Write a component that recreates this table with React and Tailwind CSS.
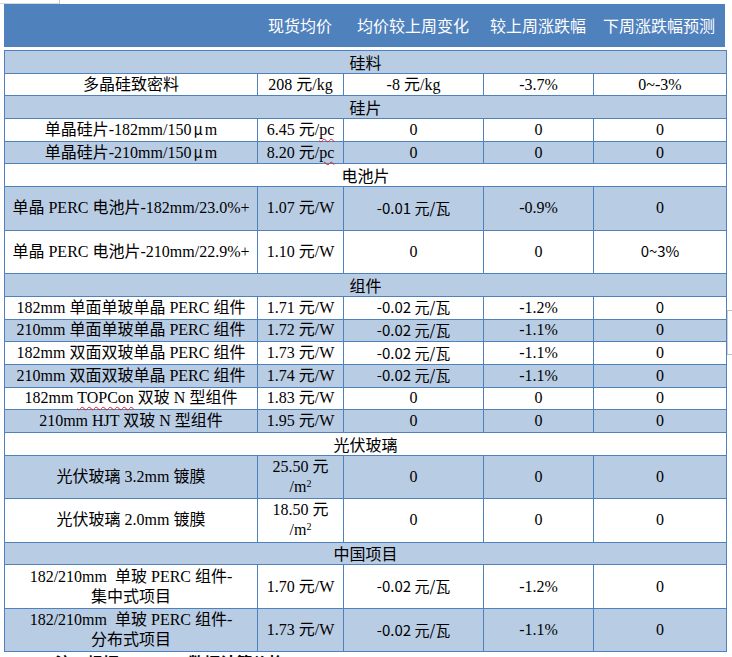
const BLUE = 'bg-[#b8cce4]';
const WHITE = 'bg-white';

const Wavy = ({ children }) => (
  <span className="underline decoration-wavy decoration-[#e02020] decoration-1 underline-offset-[3px]">{children}</span>
);

const Mu = () => <span className="font-['Noto_Sans_CJK_SC',sans-serif] mx-[2px] text-[15px]">μ</span>;

const Sans = ({ children }) => <span className="font-['Noto_Sans_CJK_SC',sans-serif] text-[15px]">{children}</span>;

const rows = [
  { section: '硅料', bg: BLUE },
  { cells: ['多晶硅致密料', '208 元/kg', '-8 元/kg', '-3.7%', '0~-3%'], bg: WHITE },
  { section: '硅片', bg: BLUE },
  { cells: [<>单晶硅片-182mm/150<Mu />m</>, <>6.45 元/<Wavy>pc</Wavy></>, '0', '0', '0'], bg: WHITE },
  { cells: [<>单晶硅片-210mm/150<Mu />m</>, <>8.20 元/<Wavy>pc</Wavy></>, '0', '0', '0'], bg: BLUE },
  { section: '电池片', bg: WHITE },
  { cells: ['单晶 PERC 电池片-182mm/23.0%+', '1.07 元/W', <Sans>-0.01 元/瓦</Sans>, '-0.9%', '0'], bg: BLUE, tall: true },
  { cells: ['单晶 PERC 电池片-210mm/22.9%+', '1.10 元/W', '0', '0', <Sans>0~3%</Sans>], bg: WHITE, tall: true },
  { section: '组件', bg: BLUE },
  { cells: ['182mm 单面单玻单晶 PERC 组件', '1.71 元/W', <Sans>-0.02 元/瓦</Sans>, '-1.2%', <Sans>0</Sans>], bg: WHITE },
  { cells: ['210mm 单面单玻单晶 PERC 组件', '1.72 元/W', <Sans>-0.02 元/瓦</Sans>, '-1.1%', '0'], bg: BLUE },
  { cells: ['182mm 双面双玻单晶 PERC 组件', '1.73 元/W', <Sans>-0.02 元/瓦</Sans>, '-1.1%', '0'], bg: WHITE },
  { cells: ['210mm 双面双玻单晶 PERC 组件', '1.74 元/W', <Sans>-0.02 元/瓦</Sans>, '-1.1%', '0'], bg: BLUE },
  { cells: [<>182mm <Wavy>TOPCon</Wavy> 双玻 N 型组件</>, '1.83 元/W', '0', '0', '0'], bg: WHITE },
  { cells: ['210mm HJT 双玻 N 型组件', '1.95 元/W', '0', '0', '0'], bg: BLUE },
  { section: '光伏玻璃', bg: WHITE },
  { cells: ['光伏玻璃 3.2mm 镀膜', <>25.50 元<br />/m<sup className="text-[10px]">2</sup></>, '0', '0', '0'], bg: BLUE, tall: true },
  { cells: ['光伏玻璃 2.0mm 镀膜', <>18.50 元<br />/m<sup className="text-[10px]">2</sup></>, '0', '0', '0'], bg: WHITE, tall: true },
  { section: '中国项目', bg: BLUE },
  { cells: [<>182/210mm&nbsp; 单玻 PERC 组件-<br />集中式项目</>, '1.70 元/W', <Sans>-0.02 元/瓦</Sans>, '-1.2%', '0'], bg: WHITE, tall: true },
  { cells: [<>182/210mm&nbsp; 单玻 PERC 组件-<br />分布式项目</>, '1.73 元/W', <Sans>-0.02 元/瓦</Sans>, '-1.1%', '0'], bg: BLUE, tall: true },
];

const headers = ['', '现货均价', '均价较上周变化', '较上周涨跌幅', '下周涨跌幅预测'];

export default function App() {
  return (
    <div className="relative w-[732px] h-[657px] overflow-hidden bg-white text-black font-['Liberation_Serif','Noto_Sans_CJK_SC',serif] text-[16px]">
      <div className="absolute left-[59px] top-0 h-[4px] w-px bg-[#c8c8c8]" />
      <div className="absolute left-0 top-[3px] h-px w-[59px] bg-[#d8d8d8]" />
      <div className="absolute left-[727px] top-[310px] h-[45px] w-px bg-[#d0d0d0]" />
      <div className="absolute left-[727px] top-[310px] h-px w-[5px] bg-[#c0c0c0]" />
      <div className="absolute left-[727px] top-[354px] h-px w-[5px] bg-[#c0c0c0]" />

      <div className="pl-[4px] pt-[4px]">
        <div className="grid grid-cols-[253px_86px_140px_110px_132px] h-[43px] w-[721px] bg-[#4f81bd] text-white text-[16px] font-['Noto_Sans_CJK_SC',sans-serif]">
          {headers.map((h, i) => (
            <div key={i} className="flex items-center justify-center pb-[1px]">{h}</div>
          ))}
        </div>

        <table className="mt-[3px] w-[722px] table-fixed border-collapse">
          <colgroup>
            <col className="w-[253px]" />
            <col className="w-[86px]" />
            <col className="w-[140px]" />
            <col className="w-[110px]" />
            <col className="w-[133px]" />
          </colgroup>
          <tbody>
            {rows.map((r, i) =>
              r.section ? (
                <tr key={i} className={`${r.bg} h-[22.7px]`}>
                  <td colSpan={5} className="border border-[#4f81bd] p-0 text-center leading-[20px] font-['Noto_Sans_CJK_SC',sans-serif]">
                    {r.section}
                  </td>
                </tr>
              ) : (
                <tr key={i} className={`${r.bg} ${r.tall ? 'h-[43.5px]' : 'h-[22.7px]'}`}>
                  {r.cells.map((c, j) => (
                    <td key={j} className="border border-[#4f81bd] p-0 text-center whitespace-nowrap leading-[20px]">
                      {c}
                    </td>
                  ))}
                </tr>
              )
            )}
          </tbody>
        </table>

        <div className="mt-[2px] pl-[51px] text-[16px] font-bold leading-[20px] whitespace-nowrap">
          注：根据 InfoLink 数据计算价格
        </div>
      </div>
    </div>
  );
}
